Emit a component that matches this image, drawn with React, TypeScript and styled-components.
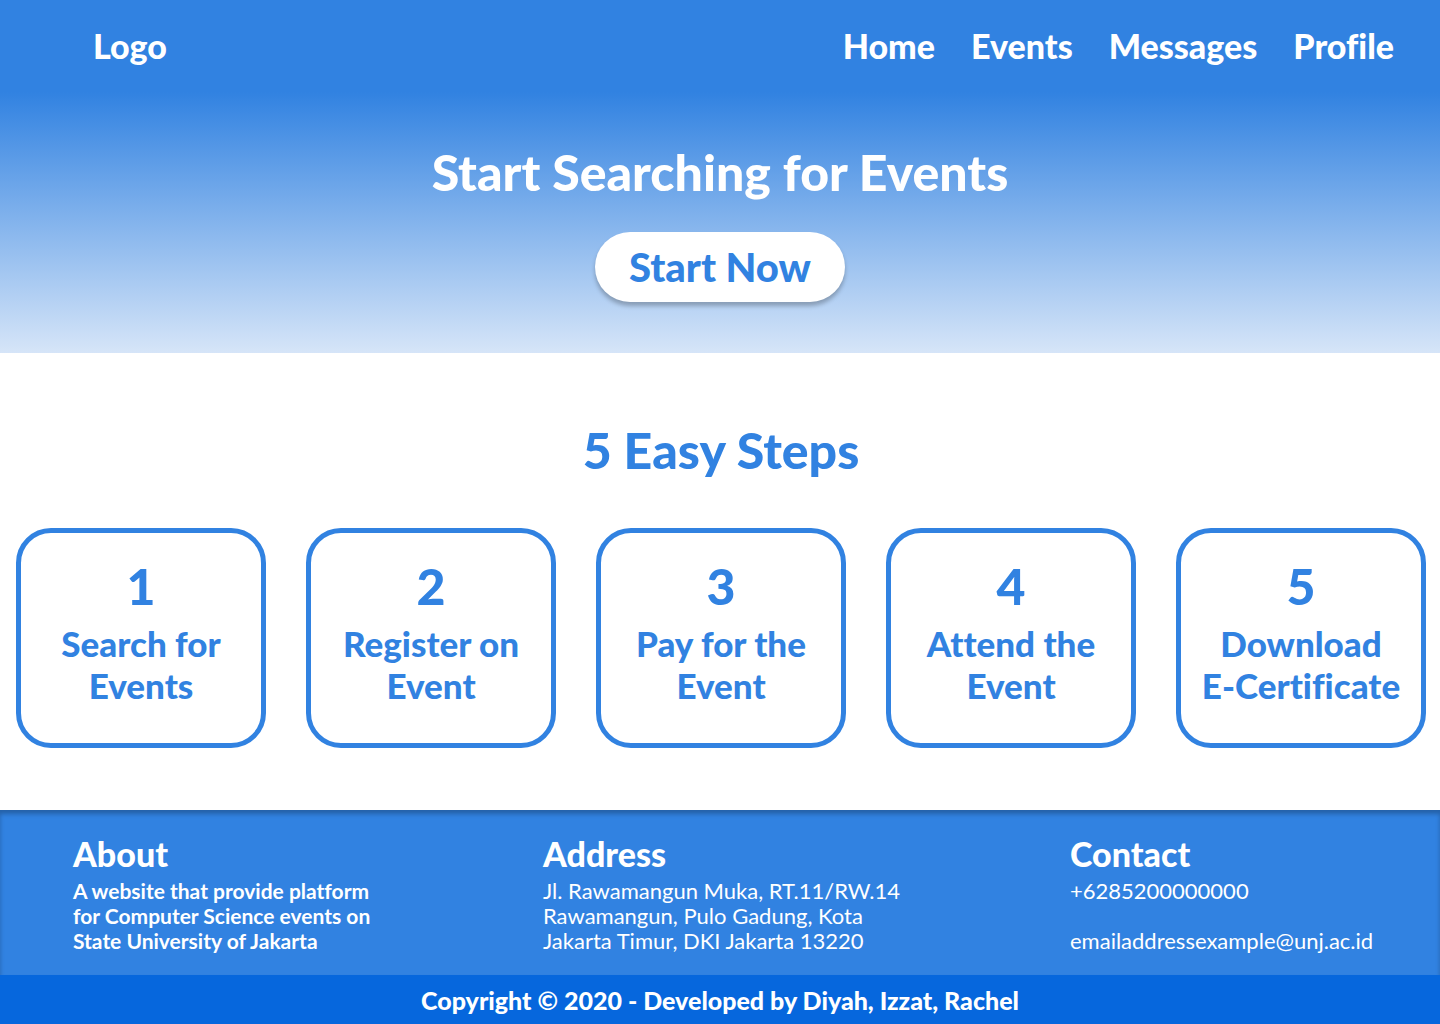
import React from "react";
import styled, { createGlobalStyle } from "styled-components";

const blue = "#3182e1";

const GlobalStyle = createGlobalStyle`
  *, *::before, *::after { box-sizing: border-box; }
  body {
    margin: 0;
    background: #fff;
    font-family: Lato, "Open Sans", sans-serif;
    font-variant-ligatures: none;
  }
  h1, h2, h3, p, ol { margin: 0; padding: 0; }
`;

const Page = styled.div`
  min-height: 100vh;
  display: flex;
  flex-direction: column;
`;

const Header = styled.header`
  display: flex;
  align-items: center;
  justify-content: space-between;
  gap: 36px;
  padding: 24px 46px 24px 93px;
  background: ${blue};
`;

const HeaderLink = styled.a`
  color: #fff;
  font-size: 34px;
  line-height: 44px;
  font-weight: 900;
  text-decoration: none;
`;

const Nav = styled.nav`
  display: flex;
  gap: 36px;
`;

const Hero = styled.section`
  display: flex;
  flex-direction: column;
  align-items: center;
  gap: 30px;
  padding: 50px 24px 51px;
  background: linear-gradient(${blue}, #d6e5f8);
`;

const Title = styled.h1`
  color: #fff;
  font-size: 50px;
  line-height: 60px;
  font-weight: 900;
  text-align: center;
`;

const StartButton = styled.button`
  min-width: 250px;
  height: 70px;
  border: 0;
  border-radius: 35px;
  background: #fff;
  color: ${blue};
  font-family: inherit;
  font-size: 40px;
  line-height: 48px;
  font-weight: 900;
  box-shadow: 0 4px 4px rgba(0, 0, 0, 0.25);
  cursor: pointer;
`;

const Steps = styled.section`
  flex: 1;
  padding: 67px 14px 62px 16px;
`;

const StepsTitle = styled.h2`
  color: ${blue};
  font-size: 50px;
  line-height: 60px;
  font-weight: 900;
  text-align: center;
`;

const StepList = styled.ol`
  display: grid;
  grid-template-columns: repeat(5, 1fr);
  gap: 40px;
  margin-top: 48px;
  list-style: none;
`;

const Step = styled.li`
  display: flex;
  flex-direction: column;
  align-items: center;
  gap: 4px;
  min-height: 220px;
  padding: 21px 12px;
  border: 5px solid ${blue};
  border-radius: 35px;
  color: ${blue};
  text-align: center;
  font-size: 35px;
  line-height: 42px;
  font-weight: 900;
`;

const StepNumber = styled.span`
  font-size: 50px;
  line-height: 64px;
`;

const StepText = styled.span`
  white-space: pre-line;
`;

const Info = styled.div`
  display: grid;
  grid-template-columns: 470fr 527fr 346fr;
  padding: 22px 24px 22px 73px;
  background: ${blue};
  color: #fff;
  box-shadow: inset 0 4px 4px rgba(0, 0, 0, 0.25);
`;

const InfoTitle = styled.h3`
  margin-bottom: 2px;
  font-size: 34px;
  line-height: 44px;
  font-weight: 900;
`;

const InfoText = styled.p<{ $bold?: boolean }>`
  font-size: ${(p) => (p.$bold ? 21 : 22)}px;
  line-height: 25px;
  font-weight: ${(p) => (p.$bold ? 700 : 400)};
  white-space: pre-line;
`;

const TextLink = styled.a`
  color: inherit;
  text-decoration: none;
`;

const Copyright = styled.p`
  padding: 10px 24px 9px;
  background: #0667dd;
  color: #fff;
  font-size: 25px;
  line-height: 30px;
  font-weight: 900;
  text-align: center;
`;

const navItems = ["Home", "Events", "Messages", "Profile"];

const steps = [
  "Search for\nEvents",
  "Register on\nEvent",
  "Pay for the\nEvent",
  "Attend the\nEvent",
  "Download\nE-Certificate",
];

export default function App() {
  return (
    <Page>
      <GlobalStyle />
      <Header>
        <HeaderLink href="#">Logo</HeaderLink>
        <Nav>
          {navItems.map((item) => (
            <HeaderLink key={item} href={`#${item.toLowerCase()}`}>{item}</HeaderLink>
          ))}
        </Nav>
      </Header>
      <Hero>
        <Title>Start Searching for Events</Title>
        <StartButton type="button">Start Now</StartButton>
      </Hero>
      <Steps>
        <StepsTitle>5 Easy Steps</StepsTitle>
        <StepList>
          {steps.map((text, i) => (
            <Step key={text}>
              <StepNumber>{i + 1}</StepNumber>
              <StepText>{text}</StepText>
            </Step>
          ))}
        </StepList>
      </Steps>
      <footer>
        <Info>
          <section>
            <InfoTitle>About</InfoTitle>
            <InfoText $bold>{"A website that provide platform\nfor Computer Science events on\nState University of Jakarta"}</InfoText>
          </section>
          <section>
            <InfoTitle>Address</InfoTitle>
            <InfoText>{"Jl. Rawamangun Muka, RT.11/RW.14\nRawamangun, Pulo Gadung, Kota\nJakarta Timur, DKI Jakarta 13220"}</InfoText>
          </section>
          <section>
            <InfoTitle>Contact</InfoTitle>
            <InfoText>
              <TextLink href="tel:+6285200000000">+6285200000000</TextLink>
              {"\n\n"}
              <TextLink href="mailto:emailaddressexample@unj.ac.id">emailaddressexample@unj.ac.id</TextLink>
            </InfoText>
          </section>
        </Info>
        <Copyright>Copyright © 2020 - Developed by Diyah, Izzat, Rachel</Copyright>
      </footer>
    </Page>
  );
}
